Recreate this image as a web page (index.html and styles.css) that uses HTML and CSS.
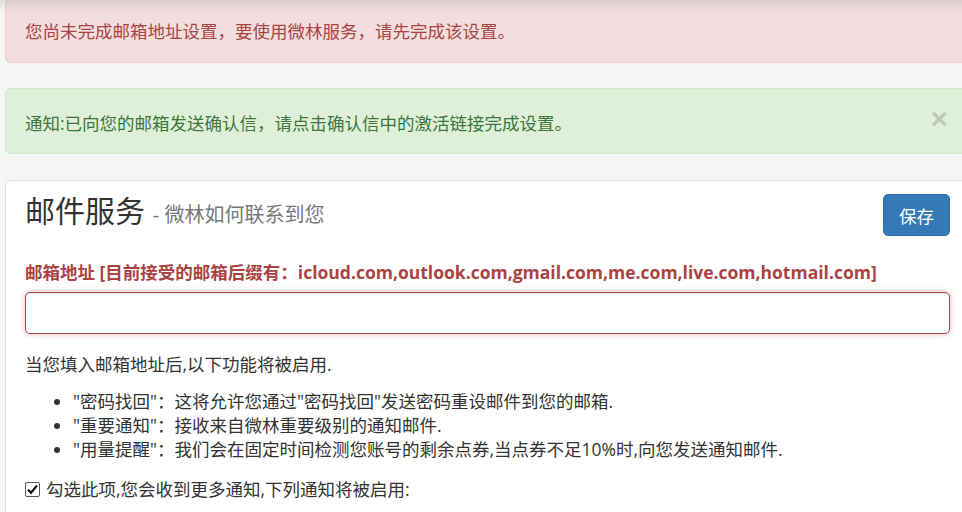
FILE: index.html
```
<!DOCTYPE html>
<html lang="zh-CN">
<head>
    <meta charset="UTF-8">
    <meta name="viewport" content="width=device-width, initial-scale=1.0">
    <title>邮件服务</title>
    <link rel="stylesheet" href="styles.css">
</head>
<body>
    <div class="top-shade"></div>
    <div class="page">
        <div class="alert alert-danger">您尚未完成邮箱地址设置，要使用微林服务，请先完成该设置。</div>
        <div class="alert alert-success">
            <span>通知:已向您的邮箱发送确认信，请点击确认信中的激活链接完成设置。</span>
            <button type="button" class="close">&times;</button>
        </div>

        <div class="panel">
            <div class="panel-head">
                <h3>邮件服务 <small>- 微林如何联系到您</small></h3>
                <button type="button" class="btn-save">保存</button>
            </div>

            <label class="field-label" for="email">邮箱地址 [目前接受的邮箱后缀有：icloud.com,outlook.com,gmail.com,me.com,live.com,hotmail.com]</label>
            <input type="text" id="email" class="field-input">

            <p class="intro">当您填入邮箱地址后,以下功能将被启用.</p>
            <ul class="features">
                <li>"密码找回"：这将允许您通过"密码找回"发送密码重设邮件到您的邮箱.</li>
                <li>"重要通知"：接收来自微林重要级别的通知邮件.</li>
                <li>"用量提醒"：我们会在固定时间检测您账号的剩余点券,当点券不足10%时,向您发送通知邮件.</li>
            </ul>

            <label class="check">
                <span class="check-box">
                    <svg width="13" height="13" viewBox="0 0 13 13"><path d="M2 6.5 L5 9.8 L11 2.5" fill="none" stroke="#111" stroke-width="2.2"/></svg>
                </span>
                勾选此项,您会收到更多通知,下列通知将被启用:
            </label>
        </div>
    </div>
</body>
</html>
```

FILE: styles.css
```
html, body {
    margin: 0;
    padding: 0;
}
body {
    font-family: "Open Sans", "Noto Sans CJK SC", sans-serif;
    font-size: 17.5px;
    line-height: 24px;
    color: #333;
    background-color: #f6f6f6;
    overflow: hidden;
    height: 512px;
}
.top-shade {
    position: absolute;
    top: 0;
    left: 0;
    right: 0;
    height: 12px;
    background: linear-gradient(rgba(0, 0, 0, 0.09), rgba(0, 0, 0, 0));
    pointer-events: none;
}
.page {
    width: 965px;
    margin: -1px 0 0 5px;
}

/* alerts */
.alert {
    display: flex;
    align-items: center;
    border: 1px solid transparent;
    border-radius: 5px;
    padding: 19px 19px;
    margin-bottom: 25px;
}
.alert-danger {
    color: #a94442;
    background-color: #f2dede;
    border-color: #ebccd1;
}
.alert-success {
    color: #3c763d;
    background-color: #dff0d8;
    border-color: #d6e9c6;
    padding: 22px 21px 18px 19px;
    margin-bottom: 26px;
}
.close {
    margin-left: auto;
    background: none;
    border: none;
    padding: 0;
    height: 24px;
    font-family: "Liberation Sans", sans-serif;
    font-size: 30px;
    font-weight: bold;
    line-height: 24px;
    color: #000;
    opacity: 0.15;
    position: relative;
    top: -4px;
}

/* panel */
.panel {
    background-color: #fff;
    border: 1px solid #ddd;
    border-radius: 5px;
    padding: 13px 19px 20px 19px;
}
.panel-head {
    display: flex;
    align-items: center;
    justify-content: space-between;
}
.panel-head h3 {
    margin: 0;
    font-size: 30px;
    font-weight: normal;
    line-height: 36px;
    position: relative;
    top: -2px;
}
.panel-head small {
    font-size: 20px;
    color: #777;
}
.btn-save {
    font-family: "Noto Sans CJK SC", sans-serif;
    font-size: 17.5px;
    color: #fff;
    background-color: #337ab7;
    border: 1px solid #2e6da4;
    border-radius: 5px;
    width: 67px;
    height: 42px;
    padding: 0;
}

.field-label {
    display: block;
    margin-top: 24px;
    margin-bottom: 8px;
    color: #a94442;
    font-weight: bold;
}
.field-input {
    display: block;
    box-sizing: border-box;
    width: 100%;
    height: 42px;
    border: 1px solid #a94442;
    border-radius: 5px;
    box-shadow: inset 0 1px 1px rgba(0, 0, 0, 0.075), 0 0 6px #e4b9b8;
    outline: none;
}

.intro {
    margin: 18px 0 13px 0;
}
.features {
    margin: 0 0 16px 0;
    padding-left: 48px;
}

.check {
    display: flex;
    align-items: center;
    gap: 6px;
}
.check-box {
    display: inline-flex;
    align-items: center;
    justify-content: center;
    box-sizing: border-box;
    width: 15px;
    height: 15px;
    border: 1px solid #555;
    border-radius: 2px;
    background-color: #fff;
}
```
